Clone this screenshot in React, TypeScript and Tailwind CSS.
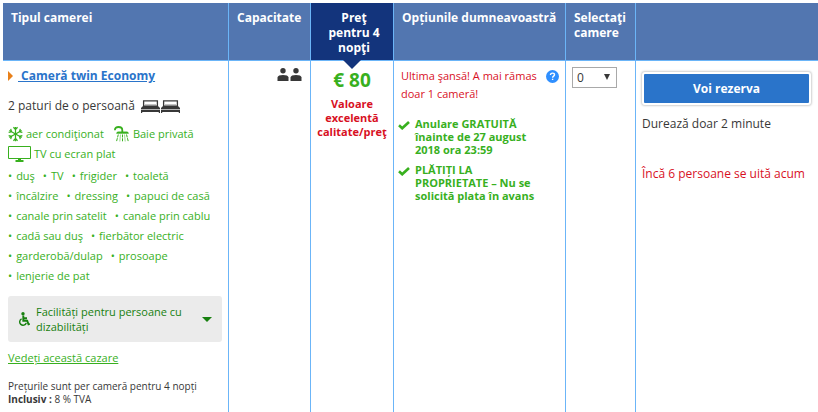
import type { ReactNode } from 'react';

const amenityRows = [
  ['duş', 'TV', 'frigider', 'toaletă'],
  ['încălzire', 'dressing', 'papuci de casă'],
  ['canale prin satelit', 'canale prin cablu'],
  ['cadă sau duş', 'fierbător electric'],
  ['garderobă/dulap', 'prosoape'],
  ['lenjerie de pat'],
];

const conditions = [
  'Anulare GRATUITĂ înainte de 27 august 2018 ora 23:59',
  'PLĂTIȚI LA PROPRIETATE – Nu se solicită plata în avans',
];

function BedIcon() {
  return (
    <svg width="19" height="13" viewBox="0 0 19 13" fill="none" aria-hidden="true">
      <path d="M2.600 6V.9h13.800V6" stroke="#383838" strokeWidth="1.300" />
      <path d="M4 4.200h11v1.300H4z" fill="#b5b5b5" />
      <path d="M2.500 5.500h14L19 8v1H0V8z" fill="#383838" />
      <path d="M0 9h19v1H0z" fill="#b5b5b5" />
      <path d="M0 10h19v3h-1.200v-1H1.200v1H0z" fill="#383838" />
    </svg>
  );
}

function SnowIcon() {
  const arm = 'M8 8V.4M5.800.8L8 3.200 10.200.8';
  return (
    <svg width="15" height="16" viewBox="0 0 16 16" fill="none" stroke="#38b01e" strokeWidth="1.300" aria-hidden="true">
      <path d={arm} />
      <path d={arm} transform="rotate(60 8 8)" />
      <path d={arm} transform="rotate(120 8 8)" />
      <path d={arm} transform="rotate(180 8 8)" />
      <path d={arm} transform="rotate(240 8 8)" />
      <path d={arm} transform="rotate(300 8 8)" />
    </svg>
  );
}

function ShowerIcon() {
  return (
    <svg width="15" height="16" viewBox="0 0 15 16" fill="none" stroke="#38b01e" aria-hidden="true">
      <path d="M.9 4.200C.9 2 2.300 1 4.500 1S8.300 2 8.300 4.200V6" strokeWidth="1.800" />
      <path d="M2.500 7.500C2.500 6.200 3.500 5.800 5 5.800h7c1.500 0 2.500.4 2.500 1.700z" fill="#38b01e" strokeWidth="0.400" />
      <path d="M4.300 8.500L2.500 15.500M8.500 8.500v7M12.500 8.500l1.800 7" strokeWidth="1" strokeDasharray="3 0.800" />
      <path d="M6.500 8.500l-.7 7M10.500 8.500l.7 7" strokeWidth="0.500" />
    </svg>
  );
}

function TvIcon() {
  return (
    <svg width="23" height="16" viewBox="0 0 23 16" fill="none" aria-hidden="true">
      <path d="M.5.5h22v12H.5z" stroke="#38b01e" />
      <path d="M10 12.500h3V14h2.500v2h-8v-2H10z" fill="#38b01e" />
    </svg>
  );
}

function PersonIcon() {
  return (
    <svg width="12" height="13" viewBox="0 0 12 13" fill="#383838" aria-hidden="true">
      <circle cx="6" cy="2.800" r="2.700" />
      <path d="M.5 13v-3.500C.5 7.800 3 7 6 7s5.500.8 5.500 2.500V13z" />
    </svg>
  );
}

function CheckIcon() {
  return (
    <svg className="mt-1 shrink-0" width="12" height="9" viewBox="0 0 12 9" fill="none" aria-hidden="true">
      <path d="M1 4.300l3.200 3L11 1" stroke="#38b01e" strokeWidth="2.600" />
    </svg>
  );
}

function HelpIcon() {
  return (
    <svg width="13" height="13" viewBox="0 0 13 13" fill="none" aria-hidden="true">
      <circle cx="6.500" cy="6.500" r="6.500" fill="#2f8fff" />
      <path d="M4.500 5.100c0-1.300.8-2 2-2s2 .7 2 1.700c0 1.300-1.900 1.300-1.900 2.900" stroke="#fff" strokeWidth="1.400" />
      <path d="M5.900 8.700h1.400V10H5.900z" fill="#fff" />
    </svg>
  );
}

function WheelchairIcon() {
  return (
    <svg width="11" height="14" viewBox="0 0 11 14" fill="none" stroke="#17800f" aria-hidden="true">
      <circle cx="4" cy="1.700" r="1.700" fill="#17800f" stroke="none" />
      <path d="M4.300 3.500v5.300h3.900l1.300 3.500 1.300-.4M4.300 6.200h3.700" strokeWidth="1.900" />
      <path d="M2.600 6.800A3.400 3.400 0 1 0 7.300 11" strokeWidth="1.400" />
    </svg>
  );
}

function HeadCell({ children, className = '' }: { children?: ReactNode; className?: string }) {
  return (
    <th
      scope="col"
      className={`h-[58px] border-r border-b border-[#6bb5f8] pt-[7px] pr-1 pl-2 text-left align-top last:border-r-0 ${className}`}
    >
      {children}
    </th>
  );
}

export default function App() {
  const cell = 'border-r border-[#6bb5f8] align-top last:border-r-0';

  return (
    <main className="min-h-screen bg-white pt-[3px] pl-[3px] font-['Open_Sans','Noto_Sans',sans-serif] text-xs text-[#383838]">
      <table className="w-full table-fixed border-separate border-spacing-0">
        <colgroup>
          <col className="w-[226px]" />
          <col className="w-[82px]" />
          <col className="w-[83px]" />
          <col className="w-[172px]" />
          <col className="w-[70px]" />
          <col />
        </colgroup>
        <thead className="text-xs leading-[15px] font-bold text-white">
          <tr>
            <HeadCell className="bg-[#5276b0]">Tipul camerei</HeadCell>
            <HeadCell className="bg-[#5276b0]">Capacitate</HeadCell>
            <HeadCell className="relative bg-[#13347c]">
              <div className="text-center">
                Preţ
                <br />
                pentru 4
                <br />
                nopţi
              </div>
              <svg className="absolute top-full left-1/2 -translate-x-1/2" width="18" height="9" viewBox="0 0 18 9" aria-hidden="true">
                <path d="M0 0h18L9 9z" fill="#13347c" />
              </svg>
            </HeadCell>
            <HeadCell className="bg-[#5276b0] whitespace-nowrap">Opțiunile dumneavoastră</HeadCell>
            <HeadCell className="bg-[#5276b0]">
              Selectaţi
              <br />
              camere
            </HeadCell>
            <HeadCell className="bg-[#5276b0]" />
          </tr>
        </thead>
        <tbody>
          <tr>
            {/* Room type */}
            <td className={`${cell} h-[351px] pt-[5px] pr-1.5 pl-[5px] whitespace-nowrap`}>
              <div className="flex items-center gap-[5px] text-xs leading-5 font-bold">
                <svg width="5" height="10" viewBox="0 0 5 10" aria-hidden="true">
                  <path d="M0 0l5 5-5 5z" fill="#e8801a" />
                </svg>
                <a href="#camera" className="whitespace-pre text-[#2a74ca] underline">{' Cameră twin Economy'}</a>
              </div>
              <div className="mt-2.5 flex items-center gap-1.5 text-xs leading-5">
                2 paturi de o persoană
                <span className="flex gap-px">
                  <BedIcon />
                  <BedIcon />
                </span>
              </div>

              <div className="mt-2 text-[11px] leading-5 text-[#38b01e]">
                <div className="flex items-center gap-2.5">
                  <span className="flex items-center gap-[3px]"><SnowIcon />aer condiţionat</span>
                  <span className="flex items-center gap-1"><ShowerIcon />Baie privată</span>
                </div>
                <div className="flex items-center gap-[3px]"><TvIcon />TV cu ecran plat</div>
                <div className="pt-0.5">
                  {amenityRows.map((row) => (
                    <ul key={row[0]} className="flex gap-2">
                      {row.map((name) => (
                        <li key={name} className="flex gap-1">
                          <span>•</span>
                          {name}
                        </li>
                      ))}
                    </ul>
                  ))}
                </div>
              </div>

              <button type="button" className="mt-2.5 flex w-full items-center rounded-[3px] bg-[#ebebeb] py-2 pr-2.5 pl-[11px] text-left text-[11px] leading-[15px] text-[#17800f]">
                <WheelchairIcon />
                <span className="ml-1.5 flex-1">
                  Facilități pentru persoane cu
                  <br />
                  dizabilități
                </span>
                <svg width="10" height="5" viewBox="0 0 10 5" aria-hidden="true">
                  <path d="M0 0h10L5 5z" fill="#17800f" />
                </svg>
              </button>
              <a href="#cazare" className="mt-2 block text-[11px] leading-4 text-[#38b01e] underline">Vedeți această cazare</a>
              <p className="mt-3.5 text-[10px] leading-[13px]">
                Prețurile sunt per cameră pentru 4 nopți
                <br />
                <b>Inclusiv :</b> 8 % TVA
              </p>
            </td>

            {/* Capacity */}
            <td className={`${cell} pt-[7px] pr-2`}>
              <div className="flex justify-end gap-px">
                <PersonIcon />
                <PersonIcon />
              </div>
            </td>

            {/* Price */}
            <td className={`${cell} pt-[7px] text-center font-bold`}>
              <div className="text-[19px] leading-6 text-[#38b01e]">€ 80</div>
              <div className="mt-[5px] text-[11px] leading-[14px] text-[#d8111f]">
                Valoare
                <br />
                excelentă
                <br />
                calitate/preţ
              </div>
            </td>

            {/* Conditions */}
            <td className={`${cell} pt-1.5 pr-1.5 pl-[7px]`}>
              <div className="flex items-start justify-between text-[11px] leading-[18px] whitespace-nowrap text-[#d8111f]">
                <p>
                  Ultima şansă! A mai rămas
                  <br />
                  doar 1 cameră!
                </p>
                <button type="button" aria-label="Detalii" className="mt-[3px]"><HelpIcon /></button>
              </div>
              <ul className="mt-3.5 -ml-[3px] flex flex-col gap-[7px] text-[11px] leading-[13px] font-bold text-[#38b01e]">
                {conditions.map((text) => (
                  <li key={text} className="flex gap-[5px]">
                    <CheckIcon />
                    <span className="w-[122px]">{text}</span>
                  </li>
                ))}
              </ul>
            </td>

            {/* Room count */}
            <td className={`${cell} pt-1.5 pl-1.5`}>
              <div className="relative w-[45px]">
                <select aria-label="Selectaţi camere" className="h-[21px] w-full appearance-none border border-[#a9a9a9] bg-white pl-1 text-xs leading-[19px]">
                  <option>0</option>
                  <option>1</option>
                </select>
                <svg className="pointer-events-none absolute top-[7px] right-[7px]" width="6" height="6" viewBox="0 0 6 6" aria-hidden="true">
                  <path d="M0 0h6L3 6z" fill="#383838" />
                </svg>
              </div>
            </td>

            {/* Booking */}
            <td className={`${cell} pt-[11px] pr-[7px] pl-1.5 text-xs whitespace-nowrap`}>
              <button type="button" className="h-[33px] w-full rounded-[3px] border-2 border-white bg-[#2a74ca] font-bold text-white shadow-[0_0_2px_1px_#d0d0d0]">
                Voi rezerva
              </button>
              <p className="mt-[9px] leading-5">Durează doar 2 minute</p>
              <p className="mt-[30px] leading-5 text-[#d8111f]">Încă 6 persoane se uită acum</p>
            </td>
          </tr>
        </tbody>
      </table>
    </main>
  );
}
